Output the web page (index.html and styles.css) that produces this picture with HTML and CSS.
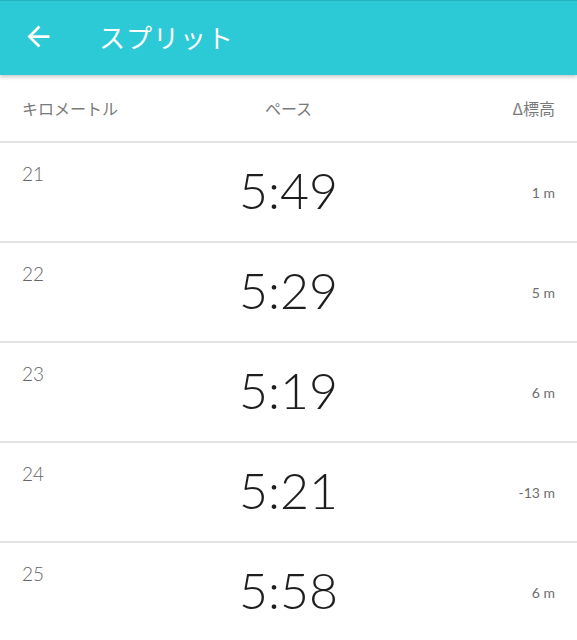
FILE: index.html
```html
<!DOCTYPE html>
<html lang="ja">
<head>
    <meta charset="UTF-8">
    <meta name="viewport" content="width=device-width, initial-scale=1.0">
    <title>スプリット</title>
    <link rel="stylesheet" href="styles.css">
</head>
<body>
    <header class="app-bar">
        <button class="back-btn" type="button" aria-label="戻る">
            <svg width="33" height="33" viewBox="0 0 24 24">
                <path d="M20 11H7.83l5.59-5.59L12 4l-8 8 8 8 1.41-1.41L7.83 13H20v-2z" fill="#fff"/>
            </svg>
        </button>
        <h1 class="title">スプリット</h1>
    </header>

    <div class="split-head">
        <span class="col-km">キロメートル</span>
        <span class="col-pace">ペース</span>
        <span class="col-elev">Δ標高</span>
    </div>

    <ul class="splits">
        <li class="split-row">
            <span class="km">21</span>
            <span class="pace">5:49</span>
            <span class="elev">1 m</span>
        </li>
        <li class="split-row">
            <span class="km">22</span>
            <span class="pace">5:29</span>
            <span class="elev">5 m</span>
        </li>
        <li class="split-row">
            <span class="km">23</span>
            <span class="pace">5:19</span>
            <span class="elev">6 m</span>
        </li>
        <li class="split-row">
            <span class="km">24</span>
            <span class="pace">5:21</span>
            <span class="elev">-13 m</span>
        </li>
        <li class="split-row">
            <span class="km">25</span>
            <span class="pace">5:58</span>
            <span class="elev">6 m</span>
        </li>
    </ul>
</body>
</html>
```

FILE: styles.css
```css
body {
    margin: 0;
    padding: 0;
    background: #fff;
    font-family: 'Lato', 'Noto Sans CJK JP', sans-serif;
    color: #222;
    overflow: hidden;
}

.app-bar {
    height: 75px;
    background-color: #2cc9d6;
    border-top: 1px solid #24b3bf;
    box-sizing: border-box;
    display: flex;
    align-items: center;
    box-shadow: 0 2px 4px rgba(0, 0, 0, 0.22);
    position: relative;
    z-index: 1;
}

.back-btn {
    background: none;
    border: none;
    padding: 0;
    margin: -3px 0 0 22px;
    width: 33px;
    height: 33px;
    display: flex;
}

.title {
    margin: -4px 0 0 44px;
    font-family: 'Noto Sans CJK JP', sans-serif;
    font-size: 26px;
    font-weight: 400;
    color: #fff;
    letter-spacing: 1px;
}

.split-head {
    height: 66px;
    padding: 0 22px;
    display: grid;
    grid-template-columns: 1fr 1fr 1fr;
    align-items: center;
    font-family: 'Noto Sans CJK JP', sans-serif;
    font-size: 16px;
    color: #7a7a7a;
    border-bottom: 2px solid #e2e2e2;
}

.col-pace {
    text-align: center;
}

.col-elev {
    text-align: right;
}

.splits {
    list-style: none;
    margin: 0;
    padding: 0;
}

.split-row {
    height: 98px;
    padding: 0 22px;
    display: grid;
    grid-template-columns: 1fr 1fr 1fr;
    align-items: center;
    border-bottom: 2px solid #e2e2e2;
}

.km {
    align-self: start;
    margin-top: 19px;
    font-size: 19px;
    font-weight: 300;
    color: #666;
}

.pace {
    text-align: center;
    margin-top: -4px;
    font-size: 50px;
    font-weight: 300;
    color: #1e1e1e;
    white-space: nowrap;
}

.elev {
    text-align: right;
    font-size: 14px;
    font-weight: 400;
    color: #6e6e6e;
}
```
